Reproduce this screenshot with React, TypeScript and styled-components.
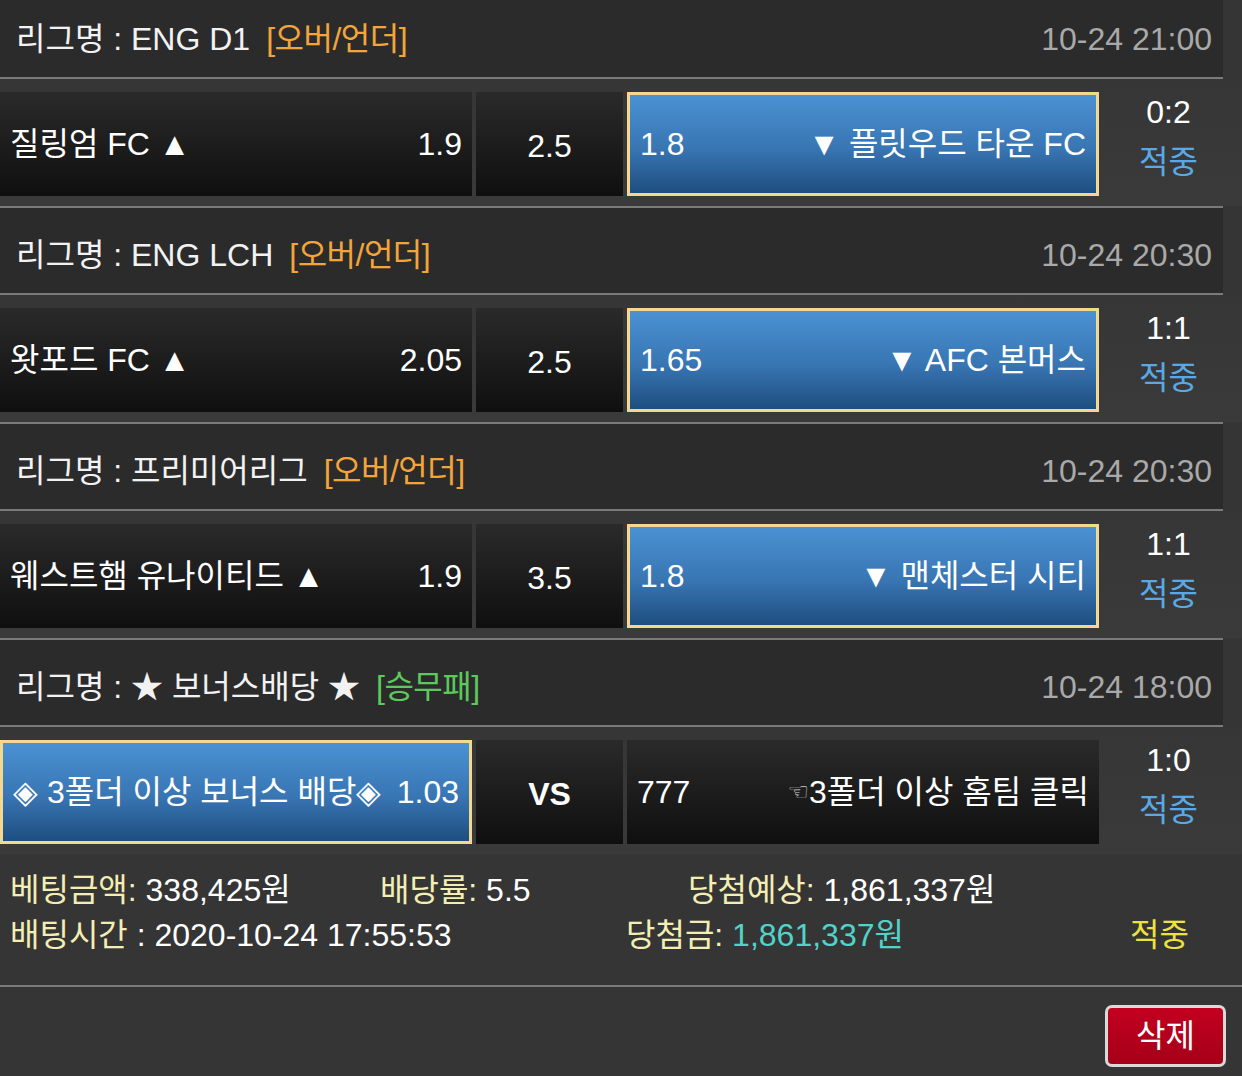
import React from "react";
import styled, { createGlobalStyle } from "styled-components";

const GlobalStyle = createGlobalStyle`
  html, body { margin: 0; padding: 0; background: #353535; }
  body { font-family: "Liberation Sans", "Noto Sans CJK KR", sans-serif; overflow: hidden; }
`;

const Page = styled.div`
  width: 1242px;
  height: 1076px;
  overflow: hidden;
  background: #353535;
  color: #fff;
  font-size: 32px;
`;

const List = styled.div`
  margin-top: -8px;
`;

const LeagueHeader = styled.div`
  width: 1223px;
  height: 87px;
  box-sizing: border-box;
  background: #2b2b2b;
  border-bottom: 2px solid #7a7a7a;
  display: flex;
  align-items: center;
  justify-content: space-between;
  padding: 8px 11px 0 16px;
  line-height: 40px;
`;

const LeagueName = styled.span`
  color: #f2f2f2;
`;

const Tag = styled.span<{ $color: string }>`
  color: ${(p) => p.$color};
  margin-left: 16px;
  letter-spacing: -0.5px;
`;

const Time = styled.span`
  color: #a9a9a9;
`;

const MatchRow = styled.div`
  display: flex;
  gap: 4px;
  padding: 13px 0 10px;
  background: linear-gradient(#363636, #3a3a3a);
`;

const Rule = styled.div<{ $full?: boolean }>`
  width: ${(p) => (p.$full ? "1242px" : "1223px")};
  height: 2px;
  background: #7a7a7a;
`;

const Cell = styled.div<{ $w: number; $selected?: boolean; $center?: boolean }>`
  width: ${(p) => p.$w}px;
  height: 104px;
  box-sizing: border-box;
  display: flex;
  align-items: center;
  justify-content: ${(p) => (p.$center ? "center" : "space-between")};
  padding: 0 10px;
  line-height: 40px;
  color: #fff;
  white-space: nowrap;
  background: ${(p) =>
    p.$selected
      ? "linear-gradient(#4b92d3, #3875b3 55%, #1e4e80)"
      : "linear-gradient(#2a2a2a, #1a1a1a 60%, #0f0f0f)"};
  border: ${(p) => (p.$selected ? "3px solid #f3d98f" : "none")};
`;

const MidText = styled.span<{ $bold?: boolean }>`
  padding-top: 4px;
  font-weight: ${(p) => (p.$bold ? 700 : 400)};
`;

const Hand = styled.span`
  font-family: "DejaVu Sans", sans-serif;
  font-size: 24px;
  color: #d0d0d0;
  vertical-align: 3px;
`;

const ScoreCell = styled.div`
  flex: 1;
  padding-right: 8px;
  margin-top: -3px;
  display: flex;
  flex-direction: column;
  align-items: center;
  line-height: 47px;
`;

const Score = styled.span`
  color: #fff;
`;

const Hit = styled.span`
  color: #5aa9e6;
  margin-top: 3px;
`;

const Summary = styled.div`
  padding: 14px 0 27px 10px;
  line-height: 45px;
`;

const SummaryLine = styled.div<{ $cols: string }>`
  display: grid;
  grid-template-columns: ${(p) => p.$cols};
  white-space: nowrap;
`;

const Label = styled.span`
  color: #f3eeb4;
`;

const Value = styled.span<{ $color?: string }>`
  color: ${(p) => p.$color || "#fff"};
`;

const Footer = styled.div`
  display: flex;
  justify-content: flex-end;
  padding: 18px 16px 0 0;
`;

const DeleteButton = styled.button`
  width: 121px;
  height: 62px;
  box-sizing: border-box;
  border: 3px solid #d9d9d9;
  border-radius: 7px;
  background: linear-gradient(#c2001f, #a60019);
  color: #fff;
  font-family: "Liberation Sans", "Noto Sans CJK KR", sans-serif;
  font-size: 32px;
  line-height: 40px;
  padding: 0;
`;

type Match = {
  league: string;
  tag: string;
  tagColor: string;
  time: string;
  home: string;
  homeOdds: string;
  mid: string;
  away: React.ReactNode;
  awayOdds: string;
  score: string;
  pick: "home" | "away";
  vs?: boolean;
};

const matches: Match[] = [
  {
    league: "리그명 : ENG D1",
    tag: "[오버/언더]",
    tagColor: "#f3a53a",
    time: "10-24 21:00",
    home: "질링엄 FC ▲",
    homeOdds: "1.9",
    mid: "2.5",
    away: "▼ 플릿우드 타운 FC",
    awayOdds: "1.8",
    score: "0:2",
    pick: "away",
  },
  {
    league: "리그명 : ENG LCH",
    tag: "[오버/언더]",
    tagColor: "#f3a53a",
    time: "10-24 20:30",
    home: "왓포드 FC ▲",
    homeOdds: "2.05",
    mid: "2.5",
    away: "▼ AFC 본머스",
    awayOdds: "1.65",
    score: "1:1",
    pick: "away",
  },
  {
    league: "리그명 : 프리미어리그",
    tag: "[오버/언더]",
    tagColor: "#f3a53a",
    time: "10-24 20:30",
    home: "웨스트햄 유나이티드 ▲",
    homeOdds: "1.9",
    mid: "3.5",
    away: "▼ 맨체스터 시티",
    awayOdds: "1.8",
    score: "1:1",
    pick: "away",
  },
  {
    league: "리그명 : ★ 보너스배당 ★",
    tag: "[승무패]",
    tagColor: "#5cc95c",
    time: "10-24 18:00",
    home: "◈ 3폴더 이상 보너스 배당◈",
    homeOdds: "1.03",
    mid: "VS",
    away: (
      <>
        <Hand>☜</Hand>3폴더 이상 홈팀 클릭
      </>
    ),
    awayOdds: "777",
    score: "1:0",
    pick: "home",
    vs: true,
  },
];

export default function App() {
  return (
    <Page>
      <GlobalStyle />
      <List>
        {matches.map((m, i) => (
          <React.Fragment key={i}>
            <LeagueHeader>
              <span>
                <LeagueName>{m.league}</LeagueName>
                <Tag $color={m.tagColor}>{m.tag}</Tag>
              </span>
              <Time>{m.time}</Time>
            </LeagueHeader>
            <MatchRow>
              <Cell $w={472} $selected={m.pick === "home"}>
                <span>{m.home}</span>
                <span>{m.homeOdds}</span>
              </Cell>
              <Cell $w={147} $center>
                <MidText $bold={m.vs}>{m.mid}</MidText>
              </Cell>
              <Cell $w={472} $selected={m.pick === "away"}>
                <span>{m.awayOdds}</span>
                <span>{m.away}</span>
              </Cell>
              <ScoreCell>
                <Score>{m.score}</Score>
                <Hit>적중</Hit>
              </ScoreCell>
            </MatchRow>
            {i < matches.length - 1 && <Rule />}
          </React.Fragment>
        ))}
      </List>
      <Summary>
        <SummaryLine $cols="370px 308px 1fr">
          <span>
            <Label>베팅금액:</Label> <Value>338,425원</Value>
          </span>
          <span>
            <Label>배당률:</Label> <Value>5.5</Value>
          </span>
          <span>
            <Label>당첨예상:</Label> <Value>1,861,337원</Value>
          </span>
        </SummaryLine>
        <SummaryLine $cols="616px 504px 1fr">
          <span>
            <Label>배팅시간</Label> <Value>: 2020-10-24 17:55:53</Value>
          </span>
          <span>
            <Label>당첨금:</Label> <Value $color="#52d3c9">1,861,337원</Value>
          </span>
          <span>
            <Value $color="#ede33e">적중</Value>
          </span>
        </SummaryLine>
      </Summary>
      <Rule $full />
      <Footer>
        <DeleteButton>삭제</DeleteButton>
      </Footer>
    </Page>
  );
}
